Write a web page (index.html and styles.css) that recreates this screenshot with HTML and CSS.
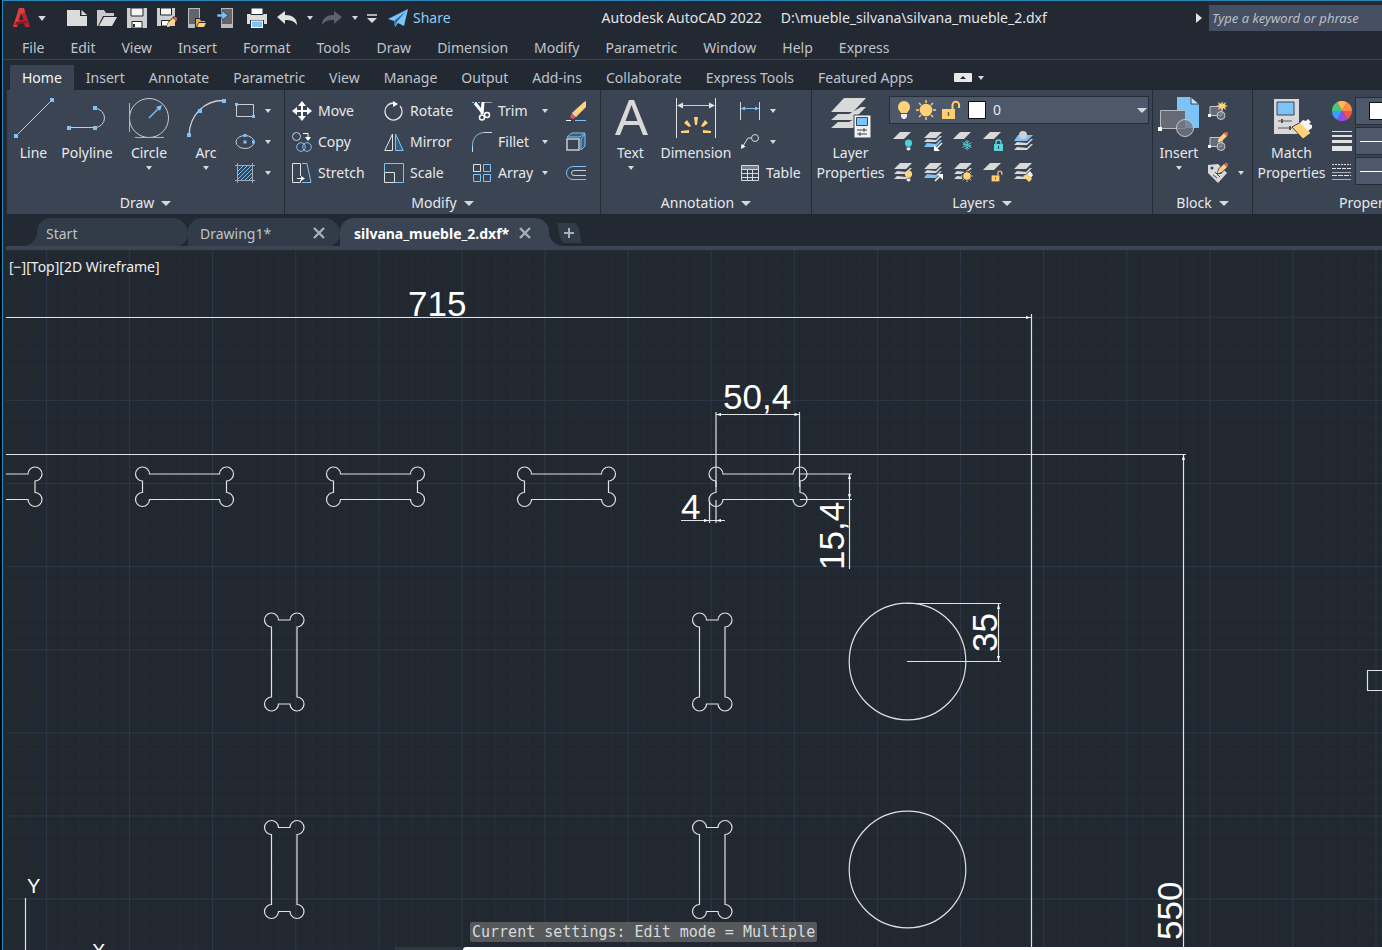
FILE: index.html
```html
<!DOCTYPE html>
<html lang="en">
<head>
<meta charset="utf-8">
<title>Autodesk AutoCAD 2022</title>
<link rel="stylesheet" href="styles.css">
</head>
<body>
<svg class="defs" aria-hidden="true">
  <symbol id="caret" viewBox="0 0 6 4"><path d="M0 0h6L3 4z" fill="#d5d9de"/></symbol>
  <symbol id="caret-lg" viewBox="0 0 10 5"><path d="M0 0h10L5 5z" fill="#d5d9de"/></symbol>
  <symbol id="close" viewBox="0 0 12 12"><path d="M1 1l10 10M11 1L1 11" stroke="#a9afb8" stroke-width="2.4"/></symbol>
  <symbol id="stack" viewBox="0 0 20 20"><path d="M7 1h12l-6 6H1zM4 9l-3 3h12l6-6h-2l-4 4zM4 14l-3 3h12l6-6h-2l-4 4z" fill="#d9d9d9"/></symbol>
  <symbol id="stack-blue" viewBox="0 0 20 20"><path d="M7 1h12l-6 6H1zM4 8l-3 3h12l6-6h-2l-4 4z" fill="#d9d9d9"/><path d="M4 12l-3 4h12l6-7h-2l-4 4z" fill="#7cc4f8"/></symbol>
  <symbol id="sheet" viewBox="0 0 20 20"><path d="M7 1h11l-7 7H0z" fill="#d9d9d9"/></symbol>
  <symbol id="bulb" viewBox="0 0 14 20"><path d="M7 1a6 6 0 0 1 6 6c0 3-2 4-3 6H4C3 11 1 10 1 7a6 6 0 0 1 6-6z" fill="currentColor"/><path d="M4 14h6v3l-2 2H6l-2-2z" fill="#eee"/></symbol>
  <symbol id="sun" viewBox="0 0 20 20"><circle cx="10" cy="10" r="6.300" fill="#ffd27a"/><path d="M10 0v3M10 17v3M0 10h3M17 10h3M3 3l2 2M15 15l2 2M17 3l-2 2M5 15l-2 2" stroke="#ffd27a" stroke-width="1.4"/></symbol>
  <symbol id="unlock" viewBox="0 0 20 20"><path d="M1 9h13v10H1z" fill="#ffcf70"/><path d="M11.500 9V5a3.300 3.300 0 0 1 6.600 0v3" fill="none" stroke="#ffcf70" stroke-width="2"/><path d="M7.500 12v4" stroke="#6b5b35" stroke-width="1.300"/></symbol>
  <symbol id="pencil" viewBox="0 0 10 10"><path d="M0 10l1-4 5-5 3 3-5 5z" fill="#ffd27a"/><path d="M6 1l1-1h2l1 1v2L9 4z" fill="#e9585a"/><path d="M0 10l.7-2.500 1.800 1.800z" fill="#eee"/></symbol>
  <symbol id="block" viewBox="0 0 20 20"><path d="M2 5.500h12v9H2z" fill="#676b76" stroke="#c5c8cd"/><circle cx="13" cy="14.500" r="4" fill="#7a7e88" fill-opacity=".7" stroke="#c5c8cd"/><path d="M0 13h3v3H0z" fill="#fff"/></symbol>
</svg>

<div class="app">
  <header class="titlebar">
    <button class="logo" aria-label="Application menu">
      <svg width="18" height="20" viewBox="0 0 18 20"><path d="M6 0h5l6 19h-5l-1-4H5l-1 4H0z" fill="#b9242c"/><path d="M6 0h5l1 4-3 2-4 9-1 4H0z" fill="#dc3b40"/><path d="M8 5l2.500 7H6z" fill="#222933"/><path d="M3 14l11-1v2L2 17z" fill="#8d1720"/></svg>
      <svg class="caret-mid"><use href="#caret"/></svg>
    </button>
    <div class="quick">
      <button aria-label="New"><svg width="20" height="20"><path d="M0 2h13v6h7v10H0z" fill="#dcdcdc"/><path d="M14.500 2l5.500 5h-5.500z" fill="#dcdcdc"/></svg></button>
      <button aria-label="Open"><svg width="20" height="20"><path d="M0 2h7l2 3h8v3H6L1 18H0z" fill="#c9c9c9"/><path d="M7 9h13l-5 9H2z" fill="#dcdcdc"/></svg></button>
      <button aria-label="Save"><svg width="20" height="20"><path d="M0 0h20v20H0z" fill="#cfcfcf"/><path d="M4 0h12v8H4z" fill="#f4f4f4" stroke="#222933"/><path d="M5 13.500h10V20H5z" fill="#fff" stroke="#222933"/><path d="M7 16v3" stroke="#222933" stroke-width="2"/></svg></button>
      <button aria-label="Save as"><svg width="20" height="20"><path d="M0 0h18v18H0z" fill="#cfcfcf"/><path d="M3.500 0h11v7h-11z" fill="#f4f4f4" stroke="#222933"/><path d="M4.500 12.500h8V18h-8z" fill="#fff" stroke="#222933"/><path d="M9 20l2-6 6-6 3 3-6 6z" fill="#222933"/><use href="#pencil" x="10" y="9" width="10" height="10"/></svg></button>
      <button aria-label="Open from web and mobile"><svg width="20" height="20"><path d="M1 0h12v20H1z" fill="#b9bbbe"/><path d="M2 1h10v15H2z" fill="#62666c"/><path d="M8 10h5l1 2h5v8H8z" fill="#222933"/><path d="M9 11h4l1 2h4v1h-6l-3 5z" fill="#e4ab45"/><path d="M12 15h7l-2 4H10z" fill="#ffd27a"/></svg></button>
      <button aria-label="Save to web and mobile"><svg width="20" height="20"><path d="M4 0h12v20H4z" fill="#b9bbbe"/><path d="M5 1h10v15H5z" fill="#62666c"/><path d="M0 6h5V2.500L11 7.500 5 12V9H0z" fill="#7cc4f8" stroke="#222933" stroke-width=".6"/></svg></button>
      <button aria-label="Plot"><svg width="20" height="20"><path d="M0 6h20v10H0z" fill="#dcdcdc"/><path d="M4 0h12v6.500H4z" fill="#fff" stroke="#222933"/><path d="M3 12h14v4H3z" fill="#222933"/><path d="M4 12.500h12V20H4z" fill="#fff"/><path d="M5 13.500h10V19H5z" fill="#7cc4f8"/></svg></button>
      <button aria-label="Undo"><svg width="20" height="20"><path d="M0 9l8-6v4c7 0 12 3 12 10-3-4-6-5-12-5v4z" fill="#e2e2e2"/></svg></button>
      <button class="drop" aria-label="Undo history"><svg class="caret-sm"><use href="#caret"/></svg></button>
      <button aria-label="Redo"><svg width="20" height="20"><path d="M20 9l-8-6v4C5 7 0 10 0 17c3-4 6-5 12-5v4z" fill="#5b616b"/></svg></button>
      <button class="drop" aria-label="Redo history"><svg class="caret-sm"><use href="#caret"/></svg></button>
      <button aria-label="Customize toolbar"><svg width="10" height="9"><path d="M0 1h10" stroke="#dcdcdc" stroke-width="1.500"/><path d="M0 4h10L5 9z" fill="#dcdcdc"/></svg></button>
      <button class="share"><svg width="20" height="18"><path d="M0 10L20 0l-4 17-6-3-3 4-1-6z" fill="#7cc4f8"/><path d="M6 12L18 2l-9 11-2 4z" fill="#2f6fa3"/></svg><span>Share</span></button>
    </div>
    <div class="caption"><span>Autodesk AutoCAD 2022</span><span>D:\mueble_silvana\silvana_mueble_2.dxf</span></div>
    <div class="search">
      <svg width="6" height="10"><path d="M0 0l6 5-6 5z" fill="#e2e2e2"/></svg>
      <input type="text" aria-label="Search" placeholder="Type a keyword or phrase">
    </div>
  </header>

  <nav class="menubar" aria-label="Menu">
    <button>File</button><button>Edit</button><button>View</button><button>Insert</button><button>Format</button><button>Tools</button><button>Draw</button><button>Dimension</button><button>Modify</button><button>Parametric</button><button>Window</button><button>Help</button><button>Express</button>
  </nav>

  <nav class="tabs" aria-label="Ribbon tabs">
    <button class="on">Home</button><button>Insert</button><button>Annotate</button><button>Parametric</button><button>View</button><button>Manage</button><button>Output</button><button>Add-ins</button><button>Collaborate</button><button>Express Tools</button><button>Featured Apps</button>
    <button class="collapse" aria-label="Minimize ribbon"><svg width="18" height="9"><rect width="18" height="9" rx="1" fill="#e8e8e8"/><path d="M6 6h6L9 3z" fill="#222933"/></svg><svg class="caret-sm"><use href="#caret"/></svg></button>
  </nav>

  <main class="ribbon">
    <section class="panel draw">
      <div class="body">
        <button class="big"><svg width="42" height="42"><path d="M3 39L39 3" stroke="#c9ccd0"/><path d="M1 37h4v4H1zM37 1h4v4h-4z" fill="#7cc4f8"/></svg>Line</button>
        <button class="big"><svg width="42" height="42"><path d="M3 30.500h26a9.500 9.500 0 0 0 0-19" fill="none" stroke="#c9ccd0"/><path d="M1 29h4v4H1zM27 29h4v4h-4zM27 9h4v4h-4z" fill="#7cc4f8"/></svg>Polyline</button>
        <button class="big"><svg width="42" height="42"><circle cx="21" cy="21" r="19.500" fill="none" stroke="#c9ccd0"/><path d="M1.500 6v29M7 40.500h29" stroke="#7cc4f8"/><path d="M21 21L31 11" stroke="#7cc4f8" stroke-width="1.500"/><path d="M34 8l-6 2 4 4z" fill="#7cc4f8"/></svg>Circle<svg class="caret-sm"><use href="#caret"/></svg></button>
        <button class="big"><svg width="42" height="42"><path d="M4 38C5 18 19 3.500 38 3.500" fill="none" stroke="#c9ccd0" stroke-width="1.300"/><path d="M2 36h4v4H2zM37 2h4v4h-4zM13 12h4v4h-4z" fill="#7cc4f8"/></svg>Arc<svg class="caret-sm"><use href="#caret"/></svg></button>
        <div class="rows">
          <button class="tool wide" aria-label="Rectangle"><svg width="20" height="20"><path d="M1.500 3.500h17v12h-17z" fill="none" stroke="#c9ccd0"/><path d="M0 2h3v3H0zM17 14h3v3h-3z" fill="#7cc4f8"/></svg><svg class="caret-sm"><use href="#caret"/></svg></button>
          <button class="tool wide" aria-label="Ellipse"><svg width="20" height="20"><ellipse cx="10" cy="10" rx="9" ry="6.500" fill="none" stroke="#c9ccd0"/><path d="M8.500 2h3v3h-3zM8.500 8.500h3v3h-3zM17 8.500h3v3h-3z" fill="#7cc4f8"/></svg><svg class="caret-sm"><use href="#caret"/></svg></button>
          <button class="tool wide" aria-label="Hatch"><svg width="20" height="20"><path d="M3 8l5-5M3 12l9-9M3 16L16 3M6 17L17 6M10 17l7-7M14 17l3-3" stroke="#7cc4f8"/><path d="M2.500 0v20M17.500 0v20M0 2.500h20M0 17.500h20" stroke="#a5a9b0"/></svg><svg class="caret-sm"><use href="#caret"/></svg></button>
        </div>
      </div>
      <button class="name">Draw<svg class="caret-lg"><use href="#caret-lg"/></svg></button>
    </section>

    <section class="panel modify">
      <div class="body">
        <button class="tool"><svg width="20" height="20"><path d="M10 2v16M2 10h16" stroke="#fff" stroke-width="2"/><path d="M10 0l4 5H6zM10 20l4-5H6zM0 10l5-4v8zM20 10l-5-4v8z" fill="#fff"/></svg>Move</button>
        <button class="tool"><svg width="20" height="20"><path d="M16 5a8.500 8.500 0 1 1-6-3" fill="none" stroke="#e2e2e2" stroke-width="1.300"/><path d="M9 0l5 3-5 3z" fill="#fff"/></svg>Rotate</button>
        <button class="tool"><svg width="20" height="20"><path d="M0 1.500h8" stroke="#7cc4f8" stroke-dasharray="2 1"/><path d="M12 1.500h8" stroke="#9ea3ab"/><path d="M3 2l8 10M11 1L10 13" stroke="#fff" stroke-width="3"/><circle cx="10" cy="16.500" r="2.500" fill="none" stroke="#fff" stroke-width="1.500"/><circle cx="15" cy="14" r="2.500" fill="none" stroke="#fff" stroke-width="1.500"/></svg>Trim<svg class="caret-sm"><use href="#caret"/></svg></button>
        <button class="tool" aria-label="Erase"><svg width="20" height="20"><path d="M0 19.500h5" stroke="#fff"/><path d="M9 19.500h11" stroke="#7cc4f8"/><path d="M20 0v6L11 15l-4-4L18 1z" fill="#ffd27a"/><path d="M7 11l4 4-1 1-4-4z" fill="#fff"/><path d="M6 12l4 4-3 2-3-2z" fill="#e9585a"/></svg></button>

        <button class="tool"><svg width="20" height="20"><circle cx="4.500" cy="4.500" r="4" fill="none" stroke="#c9ccd0"/><path d="M11 1.500h5V5" fill="none" stroke="#fff"/><path d="M13 5h6l-3 4z" fill="#fff"/><circle cx="9" cy="15" r="4.300" fill="none" stroke="#7cc4f8"/><circle cx="15" cy="15" r="4.300" fill="none" stroke="#7cc4f8"/></svg>Copy</button>
        <button class="tool"><svg width="20" height="20"><path d="M8.500 2v16.500H.8z" fill="none" stroke="#e2e2e2"/><path d="M11.500 2v16.500h7.700z" fill="#36607f" stroke="#7cc4f8"/></svg>Mirror</button>
        <button class="tool"><svg width="20" height="20"><path d="M.5 20v-6C.5 6 5 1 12 .5" fill="none" stroke="#7cc4f8"/><path d="M.5 20v-5M12 .5h8" stroke="#d5d9de"/></svg>Fillet<svg class="caret-sm"><use href="#caret"/></svg></button>
        <button class="tool" aria-label="Explode"><svg width="20" height="20"><path d="M1 7h12v11H1z" fill="none" stroke="#c9ccd0" stroke-width="1.500"/><path d="M1 5l5-4h13l-5 4zM15 7l4-5v12l-4 4z" fill="#36607f" stroke="#7cc4f8"/></svg></button>

        <button class="tool"><svg width="20" height="20"><path d="M8.500 13V.5h-8v19h8V17" fill="none" stroke="#e2e2e2"/><path d="M5 15.500h5" stroke="#fff"/><path d="M9 13l4 2.500-4 2.500z" fill="#fff"/><path d="M10 .5h5l4 19h-9" fill="none" stroke="#7cc4f8"/></svg>Stretch</button>
        <button class="tool"><svg width="20" height="20"><path d="M.5 9V.5h19v19H11" fill="none" stroke="#7cc4f8"/><path d="M.5 9.500h10v10H.5z" fill="none" stroke="#e2e2e2"/></svg>Scale</button>
        <button class="tool"><svg width="20" height="20"><path d="M1.500 1.500h7v7h-7z" fill="none" stroke="#e2e2e2"/><path d="M11.500 1.500h7v7h-7zM1.500 11.500h7v7h-7zM11.500 11.500h7v7h-7z" fill="none" stroke="#7cc4f8"/></svg>Array<svg class="caret-sm"><use href="#caret"/></svg></button>
        <button class="tool" aria-label="Offset"><svg width="20" height="20"><path d="M20 3.500H7a6.500 6.500 0 0 0 0 13h13" fill="none" stroke="#7cc4f8"/><path d="M20 7.500H8a2.500 2.500 0 0 0 0 5h12" fill="none" stroke="#c9ccd0"/></svg></button>
      </div>
      <button class="name">Modify<svg class="caret-lg"><use href="#caret-lg"/></svg></button>
    </section>

    <section class="panel annotation">
      <div class="body">
        <button class="big"><svg width="42" height="42"><path d="M5 38L19 3h5l14 35h-5l-4-10H14l-4 10zM15.500 24h12L21.500 8z" fill="#d9d9d9"/></svg>Text<svg class="caret-sm"><use href="#caret"/></svg></button>
        <button class="big"><svg width="42" height="42"><path d="M1.500 1v40M40.500 1v40" stroke="#e2e2e2"/><path d="M3 8.500h36" stroke="#c9ccd0"/><path d="M2 8.500l6-3v6zM40 8.500l-6-3v6z" fill="#e2e2e2"/><path d="M19 20h4l-1 8h-2zM9 26l3-3 4 6-2 1zM33 26l-3-3-4 6 2 1zM6 34l8-1v3H6zM36 34l-8-1v3h8z" fill="#ffd27a"/></svg>Dimension</button>
        <div class="rows">
          <button class="tool wide" aria-label="Linear"><svg width="20" height="20"><path d="M.5 1v18M19.500 1v18" stroke="#d5d9de"/><path d="M1 7.500h18" stroke="#7cc4f8"/><path d="M1 7.500l4-2v4zM19 7.500l-4-2v4z" fill="#7cc4f8"/></svg><svg class="caret-sm"><use href="#caret"/></svg></button>
          <button class="tool wide" aria-label="Leader"><svg width="20" height="20"><circle cx="15" cy="6" r="3.500" fill="none" stroke="#d5d9de"/><path d="M11.500 6H8L3 14" fill="none" stroke="#d5d9de"/><path d="M1 17l.5-5 4 2.500z" fill="#fff"/></svg><svg class="caret-sm"><use href="#caret"/></svg></button>
          <button class="tool"><svg width="20" height="20"><path d="M1.500 2.500h17v15h-17zM1.500 6.500h17M1.500 10.500h17M1.500 14.500h17M7.500 7v10.500M12.500 7v10.500" fill="none" stroke="#d5d9de"/><path d="M2 3h16v3H2z" fill="#7b818b"/></svg>Table</button>
        </div>
      </div>
      <button class="name">Annotation<svg class="caret-lg"><use href="#caret-lg"/></svg></button>
    </section>

    <section class="panel layers">
      <div class="body">
        <button class="big"><svg width="42" height="42"><path d="M14 1h22L23 15H1zM8 17l-7 6h22l13-13h-5L19 17zM8 25l-7 6h22l13-13h-5L19 25z" fill="#d9d9d9"/><path d="M24 18h17v23H24z" fill="#f2f2f2" stroke="#3b4453"/><path d="M26.500 20.500h11v8h-11z" fill="#7cc4f8" stroke="#3b4453"/><path d="M27 33h10M27 37h10" stroke="#3b4453"/><path d="M34 31v4M30 35v4" stroke="#3b4453"/></svg>Layer<br>Properties</button>
        <div class="stack">
          <div class="layerbox">
            <svg class="bulb-on" width="14" height="20"><use href="#bulb"/></svg>
            <svg width="20" height="20"><use href="#sun"/></svg>
            <svg width="20" height="20"><use href="#unlock"/></svg>
            <span class="swatch"></span>
            <select aria-label="Current layer"><option>0</option></select>
            <svg class="caret-lg"><use href="#caret-lg"/></svg>
          </div>
          <div class="layergrid">
            <button aria-label="Layer off"><svg width="20" height="20"><use href="#sheet"/><use class="teal" href="#bulb" x="11" y="8" width="9" height="12"/></svg></button>
            <button aria-label="Isolate"><svg width="20" height="20"><use href="#stack-blue"/><path d="M19 12l-6 6" stroke="#fff" stroke-width="1.500"/><path d="M11 20v-6l6 6z" fill="#fff"/></svg></button>
            <button aria-label="Freeze"><svg width="20" height="20"><use href="#sheet"/><path d="M14 9v10M9.500 11.500l9 5M9.500 16.500l9-5M12 10l2 2 2-2M12 18l2-2 2 2M10 13.500l2 .5-.5-2.500M18 14.500l-2-.5.500 2.500" stroke="#4fd0d8" fill="none"/></svg></button>
            <button aria-label="Lock"><svg width="20" height="20"><use href="#sheet"/><path d="M11 13h9v7h-9z" fill="#5bd3dc"/><path d="M13 13v-1.500a2.500 2.500 0 0 1 5 0V13" fill="none" stroke="#5bd3dc" stroke-width="1.400"/><path d="M15.500 15v3" stroke="#28474e"/></svg></button>
            <button aria-label="Make current"><svg width="20" height="20"><path d="M5 4h15l-6 6H1z" fill="#7cc4f8"/><circle cx="10" cy="4" r="4" fill="#d0d0d0"/><path d="M4 11l-3 3h13l6-6h-2l-4 4zM4 16l-3 3h13l6-6h-2l-4 4z" fill="#d9d9d9"/></svg></button>
            <button aria-label="Turn all layers on"><svg width="20" height="20"><use href="#stack"/><use class="amber" href="#bulb" x="11" y="8" width="9" height="12"/></svg></button>
            <button aria-label="Unisolate"><svg width="20" height="20"><use href="#stack-blue"/><path d="M12 19l6-6" stroke="#fff" stroke-width="1.500"/><path d="M14 12h6v6z" fill="#fff"/></svg></button>
            <button aria-label="Thaw all layers"><svg width="20" height="20"><use href="#stack"/><circle cx="14" cy="14" r="5.500" fill="#3b4453"/><use href="#sun" x="8" y="8" width="12" height="12"/></svg></button>
            <button aria-label="Unlock"><svg width="20" height="20"><use href="#sheet"/><use href="#unlock" x="8" y="8" width="12" height="12"/></svg></button>
            <button aria-label="Match layer"><svg width="20" height="20"><use href="#stack"/><path d="M10 14l4-2 5 5-3 3z" fill="#ffd27a"/><path d="M14 12l3-3 3 4-2 3z" fill="#eee"/></svg></button>
          </div>
        </div>
      </div>
      <button class="name">Layers<svg class="caret-lg"><use href="#caret-lg"/></svg></button>
    </section>

    <section class="panel blocks">
      <div class="body">
        <button class="big"><svg width="42" height="42"><path d="M19 0h14l8 7v24H19z" fill="#7cc4f8"/><path d="M33 0v7h8z" fill="#c9e7fd" stroke="#3b4453"/><path d="M2.500 13.500h25v18h-25z" fill="#676b76" stroke="#b5b8be"/><circle cx="27" cy="31" r="8.500" fill="#747883" fill-opacity=".75" stroke="#c5c8cd"/><path d="M0 30h4v4H0z" fill="#fff"/></svg>Insert<svg class="caret-sm"><use href="#caret"/></svg></button>
        <div class="rows">
          <button class="tool wide" aria-label="Create block"><svg width="20" height="20"><use href="#block"/><path d="M14 0l1 3 3-2-1 3 3 1-3 1 1 3-3-2-1 3-1-3-3 2 1-3-3-1 3-1-1-3 3 2z" fill="#ffd27a"/></svg></button>
          <button class="tool wide" aria-label="Edit block"><svg width="20" height="20"><use href="#block"/><use href="#pencil" x="10" y="0" width="10" height="10"/></svg></button>
          <button class="tool wide" aria-label="Edit attributes"><svg width="20" height="20"><path d="M0 2l10-1 9 9-9 10L0 10z" fill="#d9d9d9"/><circle cx="4" cy="5" r="1.500" fill="#3b4453"/><path d="M7 9l5 5M5 12l4 3" stroke="#3b4453"/><path d="M9 11l1-5 7-7 4 4-8 8z" fill="#3b4453"/><use href="#pencil" x="10" y="0" width="10" height="10"/></svg><svg class="caret-sm"><use href="#caret"/></svg></button>
        </div>
      </div>
      <button class="name">Block<svg class="caret-lg"><use href="#caret-lg"/></svg></button>
    </section>

    <section class="panel props">
      <div class="body">
        <button class="big"><svg width="42" height="42"><path d="M3 2h25v35H3z" fill="#d9d9d9"/><path d="M6 5h17v13H6z" fill="#7cc4f8" stroke="#3b4453"/><path d="M7 24h14M7 31h14" stroke="#50555e"/><path d="M11 22v4M19 29v4" stroke="#50555e" stroke-width="2"/><path d="M21 30l9-5 10 11-8 6z" fill="#ffd27a" stroke="#3b4453"/><path d="M29 26l3-3 3 1 2-2 3 3-2 2 3 1v3l-4 3z" fill="#f4f4f4"/></svg>Match<br>Properties</button>
        <div class="propgrid">
          <svg width="20" height="20" viewBox="0 0 20 20"><path d="M10 10L5 1.300A10 10 0 0 1 15 1.300z" fill="#ffb84a"/><path d="M10 10L15 1.300A10 10 0 0 1 20 10z" fill="#ff8a4c"/><path d="M10 10H20A10 10 0 0 1 15 18.700z" fill="#ef5350"/><path d="M10 10L15 18.700A10 10 0 0 1 5 18.700z" fill="#8e4ee8"/><path d="M10 10L5 18.700A10 10 0 0 1 0 10z" fill="#3f9df5"/><path d="M10 10H0A10 10 0 0 1 5 1.300z" fill="#45c48c"/></svg>
          <div class="propbox"><span class="swatch"></span><select aria-label="Object color"><option>ByLayer</option></select></div>
          <svg width="20" height="20"><path d="M0 .5h20" stroke="#e2e2e2"/><path d="M0 5h20" stroke="#e2e2e2" stroke-width="2"/><path d="M0 10.500h20" stroke="#e2e2e2" stroke-width="3"/><path d="M0 17.500h20" stroke="#e2e2e2" stroke-width="5"/></svg>
          <div class="propbox"><span class="rule"></span><select aria-label="Lineweight"><option>ByLayer</option></select></div>
          <svg width="20" height="20"><path d="M0 3.500h19" stroke="#e2e2e2" stroke-dasharray="2 1"/><path d="M0 7.500h19" stroke="#e2e2e2" stroke-dasharray="4 1"/><path d="M0 11.500h19M0 18.500h19" stroke="#aab0b8"/><path d="M0 14.500h19" stroke="#e2e2e2" stroke-dasharray="5 1"/></svg>
          <div class="propbox"><span class="rule"></span><select aria-label="Linetype"><option>ByLayer</option></select></div>
        </div>
      </div>
      <button class="name">Properties<svg class="caret-lg"><use href="#caret-lg"/></svg></button>
    </section>
  </main>

  <nav class="docs" aria-label="Open drawings">
    <button class="doc first"><span>Start</span></button>
    <button class="doc second"><span>Drawing1*</span><svg width="12" height="12"><use href="#close"/></svg></button>
    <button class="doc active"><span>silvana_mueble_2.dxf*</span><svg width="12" height="12"><use href="#close"/></svg></button>
    <button class="add" aria-label="New drawing"><svg width="24" height="20"><path d="M0 0h16c5 0 7 5 8 20H8C3 20 2 8 0 0z" fill="#323b48"/><path d="M12 5v10M7 10h10" stroke="#a9afb8" stroke-width="2"/></svg></button>
  </nav>

  <section class="viewport">
    <svg class="drawing" role="img" aria-label="Drawing area">
      <defs>
        <pattern id="minor" x="39.900" y="66.800" width="16.620" height="16.620" patternUnits="userSpaceOnUse"><path d="M.5 0v16.620M0 .5h16.620" stroke="#252c36"/></pattern>
        <pattern id="major" x="39.900" y="66.800" width="83.100" height="83.100" patternUnits="userSpaceOnUse"><path d="M.5 0v83.100M0 .5h83.100" stroke="#2d3547"/></pattern>
        <path id="bone" d="M7 0A7 7 0 1 0 0 7V18.500A7 7 0 1 0 7 25.500H77A7 7 0 1 0 84 18.500V7A7 7 0 1 0 77 0Z"/>
        <path id="bone-v" d="M7 0A7 7 0 1 0 0 7V77A7 7 0 1 0 7 84H18.500A7 7 0 1 0 25.500 77V7A7 7 0 1 0 18.500 0Z"/>
      </defs>
      <rect width="100%" height="100%" fill="url(#minor)"/>
      <rect width="100%" height="100%" fill="url(#major)"/>
      <g class="lines" transform="translate(-6 -250)">
        <path d="M6 317.500H1032M1031.500 314V960M6 454.500H1186M1183.500 455V960"/>
        <use href="#bone" x="-49" y="474"/><use href="#bone" x="142.500" y="474"/><use href="#bone" x="333.500" y="474"/><use href="#bone" x="524.500" y="474"/><use href="#bone" x="716" y="474"/>
        <use href="#bone-v" x="271.500" y="620"/><use href="#bone-v" x="699.500" y="620"/><use href="#bone-v" x="271.500" y="827.500"/><use href="#bone-v" x="699.500" y="827.500"/>
        <circle cx="907.500" cy="661.500" r="58.300"/><circle cx="907.500" cy="869.500" r="58.300"/>
        <path d="M716 412V487M799.500 412V487M716 414.500H800M800 474H852M800 499.500H852M849.500 474V569M709.500 500V523M716 500V523M681 520.500H725"/>
        <path d="M907 603.500H1001M907 661.500H1001M998.500 604V661"/>
        <path d="M25.500 898V960M1367.500 670.500h20v20h-20z"/>
        <path class="arrows" d="M1031 317.500l-5-1.500v3zM1183.500 455l-1.500 5h3zM716 414.500l5-1.500v3zM799.500 414.500l-5-1.500v3zM849.500 474l-1.500 5h3zM849.500 499l-1.500-5h3zM709 520.500l-5-1.500v3zM716 520.500l5-1.500v3zM998.500 604l-1.500 5h3zM998.500 661l-1.500-5h3z"/>
      </g>
      <g class="labels" transform="translate(-6 -250)">
        <text x="408" y="316">715</text><text x="723" y="409">50,4</text><text x="681" y="519">4</text>
        <text transform="translate(844 570) rotate(-90)">15,4</text>
        <text transform="translate(997 652) rotate(-90)">35</text>
        <text transform="translate(1182 940) rotate(-90)">550</text>
        <text class="axis" x="27" y="893">Y</text><text class="axis" x="92" y="958">X</text>
      </g>
    </svg>
    <span class="viewlabel">[−][Top][2D Wireframe]</span>
    <output class="prompt">Current settings: Edit mode = Multiple</output>
    <div class="cmdline"><span class="grip"></span><input type="text" aria-label="Command"></div>
  </section>
</div>
</body>
</html>
```

FILE: styles.css
```css
* { box-sizing: border-box; }
body {
  margin: 0;
  overflow: hidden;
  background: #05080c;
  color: #bfc4cb;
  font: 14px/20px "Noto Sans", "Open Sans", sans-serif;
}
button, input, select { font: inherit; color: inherit; border: 0; padding: 0; margin: 0; background: none; }
button { display: flex; align-items: center; white-space: nowrap; }
svg { display: block; flex: none; }
.defs { position: absolute; width: 0; height: 0; }
.caret-sm { width: 6px; height: 4px; }
.caret-mid { width: 8px; height: 5px; }
.caret-lg { width: 10px; height: 5px; }

.app {
  display: flex;
  flex-direction: column;
  height: 100vh;
  margin-left: 2px;
  border-left: 1px solid #2a86b8;
  border-top: 1px solid #2a86b8;
  background: #222933;
}

.titlebar { display: flex; align-items: center; height: 34px; flex: none; padding-left: 10px; }
.logo { gap: 7px; width: 54px; }
.quick { display: flex; align-items: center; gap: 10px; }
.drop { justify-content: center; width: 5px; }
.share { gap: 5px; margin-left: 1px; color: #8fcbf5; }
.caption { display: flex; gap: 19px; margin-left: 151px; color: #e2e5e8; white-space: nowrap; }
.search { display: flex; align-items: center; gap: 7px; margin-left: auto; }
.search input {
  width: 173px;
  height: 26px;
  padding-left: 3px;
  background: #464f61;
  font-size: 13px;
  font-style: italic;
}
.search input::placeholder { color: #b9bfc8; opacity: 1; }

.menubar {
  display: flex;
  gap: 26px;
  height: 25px;
  flex: none;
  padding: 2px 0 0 19px;
  border-bottom: 1px solid #3c434d;
}
.tabs { display: flex; height: 30px; flex: none; padding: 5px 0 0 7px; }
.tabs button { padding: 0 12px; }
.tabs .on { background: #3b4453; color: #f4f5f6; }
.tabs .collapse { gap: 6px; padding-left: 29px; }

.ribbon {
  display: flex;
  height: 124px;
  flex: none;
  margin-left: 4px;
  overflow: hidden;
  background: #3b4453;
  color: #e6e9ec;
}
.panel { display: flex; flex-direction: column; flex: none; border-right: 1px solid #262d38; }
.body { display: grid; flex: 1; padding-top: 5px; align-content: start; }
.name { justify-content: center; gap: 7px; height: 22px; }
.big { flex-direction: column; align-self: start; padding-top: 2px; text-align: center; }
.big svg + svg { margin-top: 3px; }
.big > svg:first-child { margin-bottom: 4px; }
.rows { display: grid; grid-auto-rows: 31px; }
.tool { gap: 6px; height: 31px; }
.wide { gap: 10px; }

.draw { width: 278px; }
.draw .body { grid-template-columns: 53px 54px 70px 44px auto; }
.draw .rows { padding-left: 7px; }
.modify { width: 316px; }
.modify .body { grid-template-columns: 92px 88px 94px 20px; padding-left: 7px; }
.modify .tool svg + svg { margin: 0 18px 0 auto; }
.annotation { width: 211px; }
.annotation .body { grid-template-columns: 59px 72px auto; }
.annotation .rows { padding-left: 8px; }
.layers { width: 341px; }
.layers .body { grid-template-columns: 77px auto; }
.blocks { width: 100px; }
.blocks .body { grid-template-columns: 52px auto; }
.blocks .rows { padding-left: 3px; }
.props { width: 258px; }
.props .body { grid-template-columns: 77px auto; }

.stack { padding: 1px 3px 0 0; }
.layerbox {
  display: flex;
  align-items: center;
  gap: 5px;
  height: 28px;
  padding: 0 1px 0 7px;
  background: #4d586b;
  border: 1px solid #262d38;
}
.bulb-on, .amber { color: #ffd27a; }
.teal { color: #4fd0d8; }
.layerbox select, .propbox select { flex: 1; min-width: 0; appearance: none; }
.swatch { width: 18px; height: 18px; margin: 0 2px; background: #fff; border: 1px solid #111; }
.layergrid { display: grid; grid-template-columns: repeat(5, 20px); gap: 11px 10px; padding: 7px 0 0 4px; }

.propgrid {
  display: grid;
  grid-template-columns: 20px auto;
  grid-auto-rows: 28px;
  gap: 2px 3px;
  padding: 2px 4px 0 2px;
  align-items: center;
}
.propbox {
  display: flex;
  align-items: center;
  gap: 8px;
  height: 28px;
  padding-left: 4px;
  background: #4d586b;
  border: 1px solid #262d38;
}
.propbox .swatch { margin-left: 9px; }
.rule { width: 60px; height: 1px; background: #fff; }

.docs {
  display: flex;
  height: 36px;
  flex: none;
  padding: 4px 0 0 31px;
  margin-left: 3px;
  border-bottom: 4px solid #3b4453;
}
.doc {
  position: relative;
  justify-content: space-between;
  height: 28px;
  padding: 3px 18px 0 14px;
  border-radius: 14px 16px 12px 0;
  background: #323b48;
}
.doc svg { margin-bottom: 2px; }
.doc.first { width: 151px; padding-left: 9px; }
.doc.second { width: 152px; padding-left: 12px; padding-right: 15px; }
.doc.first::before, .doc.active::after {
  content: "";
  position: absolute;
  bottom: 0;
  width: 14px;
  height: 14px;
}
.doc.first::before { right: 100%; background: radial-gradient(circle at 0 0, transparent 14px, #323b48 14px); }
.doc.active::after { left: 100%; background: radial-gradient(circle at 100% 0, transparent 14px, #3b4453 14px); }
.doc.active { gap: 10px; border-radius: 14px 14px 0 0; background: #3b4453; color: #fff; font-weight: 700; }
.add { margin-left: 8px; padding-top: 2px; }

.viewport { position: relative; flex: 1; min-height: 0; margin-left: 3px; overflow: hidden; background: #212830; }
.drawing { width: 100%; height: 100%; }
.lines { fill: none; stroke: #dfe3e6; stroke-width: 1.2px; }
.arrows { fill: #fff; stroke: none; }
.labels { fill: #fff; font: 35px "Liberation Sans", Arial, sans-serif; }
.labels .axis { font-size: 20px; }
.viewlabel { position: absolute; left: 3px; top: 7px; color: #eceef0; }
.prompt {
  position: absolute;
  left: 464px;
  bottom: 8px;
  height: 20px;
  padding: 0 2px;
  border-radius: 2px;
  background: #56595c;
  color: #d8dadc;
  font: 15px/20px "DejaVu Sans Mono", monospace;
  white-space: nowrap;
}
.cmdline { position: absolute; left: 389px; right: 0; bottom: 0; display: flex; height: 3px; }
.cmdline .grip { width: 68px; background: #2f3643; }
.cmdline input { flex: 1; min-width: 0; background: #fff; border-radius: 3px 0 0 0; }
```
